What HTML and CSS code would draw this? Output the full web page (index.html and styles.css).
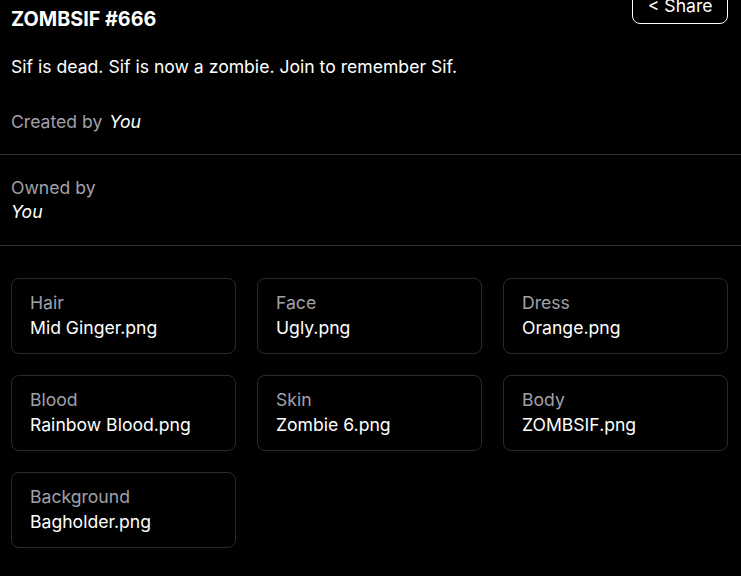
FILE: index.html
```html
<!DOCTYPE html>
<html lang="en">

<head>
  <meta charset="UTF-8">
  <meta name="viewport" content="width=device-width, initial-scale=1.0">
  <title>ZOMBSIF #666</title>
  <link rel="stylesheet" href="styles.css">
</head>

<body>
  <div id="header" class="padded">
    <h1 id="title">ZOMBSIF #666</h1>
    <button id="share-button">&lt; Share</button>
  </div>

  <p id="description" class="padded">Sif is dead. Sif is now a zombie. Join to remember Sif.</p>

  <div id="created" class="padded section">
    <span class="muted">Created by</span>
    <span class="who">You</span>
  </div>

  <div id="owned" class="padded section">
    <div class="muted">Owned by</div>
    <div class="who">You</div>
  </div>

  <div id="traits" class="padded">
    <div class="trait">
      <div class="muted">Hair</div>
      <div>Mid Ginger.png</div>
    </div>
    <div class="trait">
      <div class="muted">Face</div>
      <div>Ugly.png</div>
    </div>
    <div class="trait">
      <div class="muted">Dress</div>
      <div>Orange.png</div>
    </div>
    <div class="trait">
      <div class="muted">Blood</div>
      <div>Rainbow Blood.png</div>
    </div>
    <div class="trait">
      <div class="muted">Skin</div>
      <div>Zombie 6.png</div>
    </div>
    <div class="trait">
      <div class="muted">Body</div>
      <div>ZOMBSIF.png</div>
    </div>
    <div class="trait">
      <div class="muted">Background</div>
      <div>Bagholder.png</div>
    </div>
  </div>
</body>

</html>
```

FILE: styles.css
```css
body {
  margin: 0;
  background-color: #000;
  color: #fff;
  font-family: Inter, "Noto Sans", sans-serif;
  font-size: 17.6px;
  line-height: 24px;
}

.padded {
  padding-left: 11px;
  padding-right: 13px;
}

#header {
  display: flex;
  justify-content: space-between;
  align-items: flex-start;
  margin-top: -14px;
}

#title {
  margin: 19px 0 0 0;
  font-size: 19.8px;
  line-height: 28px;
  font-weight: 700;
}

#share-button {
  height: 38px;
  padding: 0 14.5px;
  background: #000;
  color: #fff;
  border: 1px solid #fff;
  border-radius: 8px;
  font-family: inherit;
  font-size: 17.6px;
}

#description {
  margin: 22px 0 0 0;
}

.muted {
  color: #a1a1aa;
}

.who {
  font-style: italic;
}

#created {
  margin-top: 31px;
  padding-bottom: 20px;
  border-bottom: 1px solid #333;
}

#created .who {
  margin-left: 2px;
}

#owned {
  padding-top: 21px;
  padding-bottom: 21px;
  border-bottom: 1px solid #333;
}

#traits {
  display: grid;
  grid-template-columns: repeat(3, 1fr);
  column-gap: 21px;
  row-gap: 21px;
  margin-top: 32px;
}

.trait {
  padding: 11px 18px 13px;
  border: 1px solid #2a2a2a;
  border-radius: 8px;
  line-height: 25px;
}
```
